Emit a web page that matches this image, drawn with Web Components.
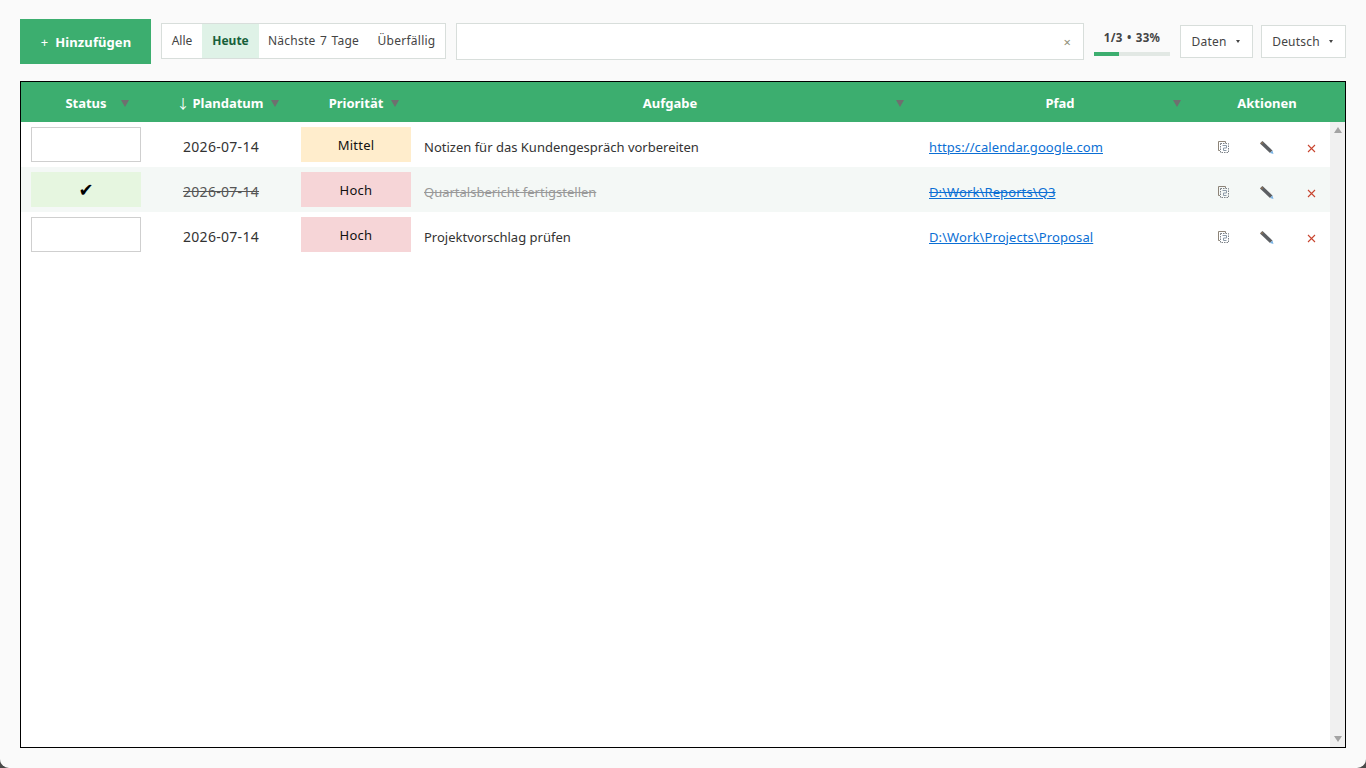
<!DOCTYPE html>
<html lang="de">
<head>
<meta charset="utf-8">
<title>Aufgaben</title>
<style>
  html { background: #4a4a4a; }
  body { margin: 0; }
</style>
</head>
<body>
<todo-app></todo-app>
<script>
// shared font stack
const FONT = '"Noto Sans", "Noto Sans CJK SC", sans-serif';

class TodoApp extends HTMLElement {
  constructor() {
    super();
    const root = this.attachShadow({mode: 'open'});
    root.innerHTML = `
      <style>
      :host {
        background: #fafafa;
        border-radius: 0 0 9px 9px;
        box-sizing: border-box;
        color: #333;
        display: flex;
        flex-direction: column;
        font-family: ${FONT};
        font-size: 13px;
        height: 768px;
        padding: 19px 20px 20px;
      }
      </style>
      <todo-toolbar></todo-toolbar>
      <todo-table></todo-table>
    `;
  }
}

class TodoToolbar extends HTMLElement {
  constructor() {
    super();
    const root = this.attachShadow({mode: 'open'});
    root.innerHTML = `
      <style>
      :host {
        align-items: center;
        display: flex;
        flex: none;
        height: 45px;
        margin-bottom: 17px;
      }
      .add {
        align-items: center;
        background: #3cae6f;
        color: #fff;
        display: flex;
        font-size: 13px;
        font-weight: 700;
        height: 45px;
        justify-content: center;
        letter-spacing: .1px;
        padding-left: 1px;
        box-sizing: border-box;
        width: 131px;
      }
      .add span { font-weight: 400; margin-right: 7px; }
      filter-tabs { margin-left: 10px; }
      .search {
        align-items: center;
        background: #fff;
        border: 1px solid #d8dedb;
        box-sizing: border-box;
        color: #8f8f78;
        display: flex;
        font-size: 13px;
        height: 37px;
        justify-content: flex-end;
        margin-left: 10px;
        padding-right: 12px;
        width: 628px;
      }
      progress-info { margin-left: 10px; }
      drop-button { margin-left: 10px; }
      drop-button + drop-button { margin-left: 8px; }
      </style>
      <div class="add"><span>+</span>Hinzufügen</div>
      <filter-tabs></filter-tabs>
      <div class="search">×</div>
      <progress-info></progress-info>
      <drop-button style="width:73px">Daten</drop-button>
      <drop-button style="width:85px">Deutsch</drop-button>
    `;
  }
}

class FilterTabs extends HTMLElement {
  constructor() {
    super();
    const root = this.attachShadow({mode: 'open'});
    root.innerHTML = `
      <style>
      :host {
        background: #fff;
        border: 1px solid #d8dedb;
        box-sizing: border-box;
        display: flex;
        height: 36px;
        margin-top: -1px;
        width: 285px;
      }
      div {
        align-items: center;
        color: #444;
        display: flex;
        font-size: 12px;
        justify-content: center;
        padding-bottom: 2px;
      }
      .on {
        background: #dff2e7;
        color: #17603a;
        font-weight: 700;
      }
      .wide { letter-spacing: .25px; word-spacing: 1px; }
      </style>
      <div style="width:40px">Alle</div>
      <div class="on" style="width:57px">Heute</div>
      <div class="wide" style="width:109px">Nächste 7 Tage</div>
      <div class="wide" style="width:77px">Überfällig</div>
    `;
  }
}

class ProgressInfo extends HTMLElement {
  constructor() {
    super();
    const root = this.attachShadow({mode: 'open'});
    root.innerHTML = `
      <style>
      :host {
        align-self: flex-start;
        display: block;
        flex: none;
        margin-top: 9px;
        text-align: center;
        width: 76px;
      }
      .txt {
        color: #444;
        font-size: 11.5px;
        font-weight: 700;
        height: 24px;
        letter-spacing: .3px;
        line-height: 20px;
        word-spacing: 1px;
      }
      .bar { background: #e2e8e4; height: 4px; }
      .bar div { background: #3cae6f; height: 4px; width: 33%; }
      </style>
      <div class="txt">1/3 • 33%</div>
      <div class="bar"><div></div></div>
    `;
  }
}

class DropButton extends HTMLElement {
  constructor() {
    super();
    const root = this.attachShadow({mode: 'open'});
    root.innerHTML = `
      <style>
      :host {
        align-items: center;
        background: #fff;
        border: 1px solid #d8dedb;
        box-sizing: border-box;
        color: #444;
        display: flex;
        flex: none;
        font-size: 12px;
        height: 33px;
        justify-content: center;
        letter-spacing: .2px;
        padding-right: 2px;
      }
      i {
        border-left: 2px solid transparent;
        border-right: 2px solid transparent;
        border-top: 3px solid #444;
        margin-left: 9px;
      }
      </style>
      <slot></slot><i></i>
    `;
  }
}

class TodoTable extends HTMLElement {
  constructor() {
    super();
    const root = this.attachShadow({mode: 'open'});
    root.innerHTML = `
      <style>
      :host {
        background: #fff;
        border: 1px solid #000;
        display: flex;
        flex: 1;
        flex-direction: column;
        min-height: 0;
      }
      .head {
        background: #3cae6f;
        color: #fff;
        display: grid;
        flex: none;
        font-size: 13px;
        font-weight: 700;
        grid-template-columns: 130px 140px 130px 498px 282px 132px;
        height: 40px;
      }
      .head div {
        align-items: center;
        display: flex;
        justify-content: center;
        padding-top: 1px;
        position: relative;
      }
      .head b { font-weight: 400; margin-right: 3px; margin-left: -2px; }
      .head i {
        border-left: 4px solid transparent;
        border-right: 4px solid transparent;
        border-top: 7px solid #6f6f6f;
        position: absolute;
        top: 18px;
      }
      .body { display: flex; flex: 1; min-height: 0; }
      .rows { flex: 1; min-width: 0; }
      .scroll {
        background: #f0f0f0;
        display: flex;
        flex: none;
        flex-direction: column;
        justify-content: space-between;
        padding: 5px 0;
        width: 15px;
      }
      .scroll i {
        align-self: center;
        border-left: 4px solid transparent;
        border-right: 4px solid transparent;
      }
      .up { border-bottom: 6px solid #a3a3a3; }
      .down { border-top: 6px solid #a3a3a3; }
      </style>
      <div class="head">
        <div>Status<i style="left:100px"></i></div>
        <div><b>↓</b>Plandatum<i style="left:120px"></i></div>
        <div>Priorität<i style="left:100px"></i></div>
        <div>Aufgabe<i style="left:475px"></i></div>
        <div>Pfad<i style="left:254px"></i></div>
        <div>Aktionen</div>
      </div>
      <div class="body">
        <div class="rows">
          <todo-row date="2026-07-14" prio="Mittel" task="Notizen für das Kundengespräch vorbereiten" path="https://calendar.google.com"></todo-row>
          <todo-row done date="2026-07-14" prio="Hoch" task="Quartalsbericht fertigstellen" path="D:\\Work\\Reports\\Q3"></todo-row>
          <todo-row date="2026-07-14" prio="Hoch" task="Projektvorschlag prüfen" path="D:\\Work\\Projects\\Proposal"></todo-row>
        </div>
        <div class="scroll"><i class="up"></i><i class="down"></i></div>
      </div>
    `;
  }
}

class TodoRow extends HTMLElement {
  constructor() {
    super();
    this.attachShadow({mode: 'open'});
  }

  connectedCallback() {
    const done = this.hasAttribute('done');
    const prio = this.getAttribute('prio');
    this.shadowRoot.innerHTML = `
      <style>
      :host {
        background: ${done ? '#f4f8f6' : '#fff'};
        color: #333;
        display: grid;
        font-size: 13px;
        grid-template-columns: 130px 140px 130px 498px 280px 1fr;
        height: 45px;
      }
      .box {
        align-items: center;
        box-sizing: border-box;
        display: flex;
        height: 35px;
        justify-content: center;
        margin: 5px 10px;
        width: 110px;
      }
      .status {
        background: ${done ? '#e6f6e0' : '#fff'};
        border: ${done ? '0' : '1px solid #cfcfcf'};
        color: #000;
        font-family: "DejaVu Sans", sans-serif;
        font-size: 18px;
      }
      .prio {
        background: ${prio == 'Hoch' ? '#f6d5d7' : '#ffedcc'};
        color: #111;
        letter-spacing: .25px;
      }
      .txt {
        align-items: center;
        display: flex;
        padding-top: 5px;
        ${done ? 'color: #999; text-decoration: line-through;' : ''}
      }
      .date {
        font-size: 14px;
        justify-content: center;
        letter-spacing: .3px;
        padding-top: 4px;
        ${done ? 'color: #555;' : ''}
      }
      .task { padding-left: 3px; }
      .path { padding-left: 10px; }
      a {
        color: #0b6fd4;
        letter-spacing: .1px;
        text-decoration: underline ${done ? 'line-through' : ''};
      }
      .acts {
        display: grid;
        grid-template-columns: repeat(3, 44px);
      }
      .acts div {
        align-items: center;
        display: flex;
        justify-content: center;
        padding: 5px 0 0 4px;
      }
      .acts div:last-child { padding-top: 7px; }
      </style>
      <div><div class="box status">${done ? '✔' : ''}</div></div>
      <div class="txt date">${this.getAttribute('date')}</div>
      <div><div class="box prio">${prio}</div></div>
      <div class="txt task">${this.getAttribute('task')}</div>
      <div class="txt path"><a href="#">${this.getAttribute('path')}</a></div>
      <div class="acts">
        <div>
          <svg width="11" height="12" viewBox="0 0 11 12" fill="none" stroke="#7d8288">
            <path d="M7.500 2V.5h-7v9H2" stroke="#8d8478"/>
            <path d="M2.500 2.500h8v9h-8z" stroke-dasharray="1.500 1"/>
            <path d="M4.500 4.500h4v2.500h-3v2.500h3" stroke="#8c9aa8"/>
          </svg>
        </div>
        <div>
          <svg width="14" height="13" viewBox="0 0 14 13">
            <path d="M0 2.500 2.500 0 12.500 9.500 10 12z" fill="#5c5f63"/>
            <path d="M.5 2 2 .5 3.500 2 2 3.500z" fill="#85705c"/>
            <path d="M10 12 12.500 9.500 13.500 13z" fill="#7ab4e6"/>
          </svg>
        </div>
        <div>
          <svg width="9" height="9" viewBox="0 0 9 9" stroke="#c8452f" stroke-width="1.100">
            <path d="M1 1l7 7M8 1l-7 7"/>
          </svg>
        </div>
      </div>
    `;
  }
}

customElements.define('todo-app', TodoApp);
customElements.define('todo-toolbar', TodoToolbar);
customElements.define('filter-tabs', FilterTabs);
customElements.define('progress-info', ProgressInfo);
customElements.define('drop-button', DropButton);
customElements.define('todo-table', TodoTable);
customElements.define('todo-row', TodoRow);
</script>
</body>
</html>
